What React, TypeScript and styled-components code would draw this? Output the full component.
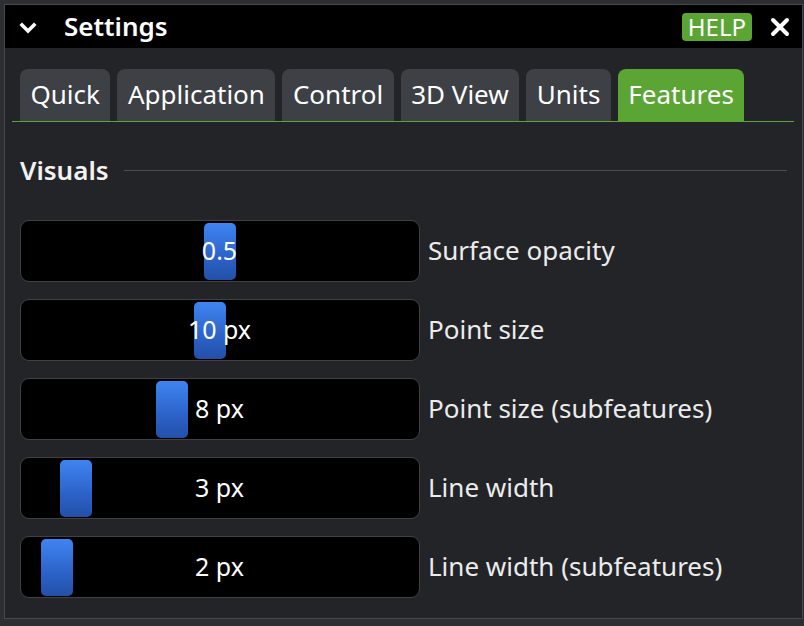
import React from "react";
import styled, { createGlobalStyle } from "styled-components";

const Global = createGlobalStyle`
  html, body { margin: 0; padding: 0; background: #2d2e32; }
  body { font-family: "Noto Sans", "Open Sans", sans-serif; color: #ececec; }
`;

const Window = styled.div`
  box-sizing: border-box;
  width: 799px;
  height: 615px;
  margin: 4px 0 0 4px;
  border: 1px solid #46484c;
  background: #232428;
  display: flex;
  flex-direction: column;
`;

const Header = styled.div`
  height: 43px;
  background: #000;
  display: flex;
  align-items: center;
  padding: 0 12px 0 14px;
  flex-shrink: 0;
`;

const Chevron = styled.svg`
  width: 18px;
  height: 12px;
  margin-top: 2px;
`;

const Title = styled.div`
  margin-left: 27px;
  font-size: 26px;
  font-weight: 600;
  color: #fff;
  flex: 1;
  line-height: 1;
  margin-top: -2px;
`;

const HelpBadge = styled.div`
  background: #5ba535;
  color: #fff;
  font-size: 24px;
  line-height: 28px;
  height: 28px;
  padding: 0 6px;
  border-radius: 4px;
`;

const CloseIcon = styled.svg`
  width: 20px;
  height: 20px;
  margin-left: 18px;
`;

const TabBar = styled.div`
  margin: 21px 8px 0 7px;
  padding-left: 8px;
  display: flex;
  gap: 7px;
  border-bottom: 1px solid #5ba535;
  height: 52px;
`;

const Tab = styled.div<{ $active?: boolean }>`
  height: 52px;
  box-sizing: border-box;
  padding: 0 10.5px;
  border-radius: 8px 8px 0 0;
  background: ${(p) => (p.$active ? "#5ba535" : "#3d4045")};
  color: #fff;
  font-size: 26px;
  line-height: 50px;
  white-space: nowrap;
`;

const Content = styled.div`
  padding: 0 0 0 15px;
  display: flex;
  flex-direction: column;
`;

const SectionHeader = styled.div`
  display: flex;
  align-items: center;
  margin-top: 31px;
  height: 34px;
  margin-right: 15px;
`;

const SectionTitle = styled.div`
  font-size: 26px;
  font-weight: 600;
  color: #f2f2f2;
  line-height: 34px;
`;

const SectionLine = styled.div`
  flex: 1;
  height: 1px;
  background: #4a4c50;
  margin-left: 15px;
`;

const Rows = styled.div`
  display: flex;
  flex-direction: column;
  gap: 17px;
  margin-top: 33px;
`;

const Row = styled.div`
  display: flex;
  align-items: center;
`;

const Slider = styled.div`
  position: relative;
  box-sizing: border-box;
  width: 400px;
  height: 62px;
  background: #000;
  border: 1px solid #3f4145;
  border-radius: 9px;
  display: flex;
  align-items: center;
  justify-content: center;
`;

const Handle = styled.div`
  position: absolute;
  top: 2px;
  width: 32px;
  height: 57px;
  border-radius: 5px;
  background: linear-gradient(180deg, #3f84f2 0%, #2c62c8 60%, #2350a8 100%);
`;

const Value = styled.div`
  position: relative;
  font-size: 25px;
  color: #fff;
  line-height: 1;
  margin-top: -2px;
  margin-left: -1px;
`;

const Label = styled.div`
  margin-left: 8px;
  font-size: 26px;
  color: #ececec;
  white-space: nowrap;
  margin-top: -3px;
`;

const tabs = ["Quick", "Application", "Control", "3D View", "Units", "Features"];

const sliders = [
  { value: "0.5", frac: 0.5, label: "Surface opacity" },
  { value: "10 px", frac: 9 / 19, label: "Point size" },
  { value: "8 px", frac: 7 / 19, label: "Point size (subfeatures)" },
  { value: "3 px", frac: 2 / 19, label: "Line width" },
  { value: "2 px", frac: 1 / 19, label: "Line width (subfeatures)" },
];

export default function App() {
  return (
    <>
      <Global />
      <Window>
        <Header>
          <Chevron viewBox="0 0 18 12">
            <path d="M3 3 L9 9 L15 3" fill="none" stroke="#fff" strokeWidth="3.6" strokeLinecap="square" strokeLinejoin="miter" />
          </Chevron>
          <Title>Settings</Title>
          <HelpBadge>HELP</HelpBadge>
          <CloseIcon viewBox="0 0 20 20">
            <path d="M3 3 L17 17 M17 3 L3 17" stroke="#fff" strokeWidth="4" strokeLinecap="round" />
          </CloseIcon>
        </Header>
        <TabBar>
          {tabs.map((t) => (
            <Tab key={t} $active={t === "Features"}>
              {t}
            </Tab>
          ))}
        </TabBar>
        <Content>
          <SectionHeader>
            <SectionTitle>Visuals</SectionTitle>
            <SectionLine />
          </SectionHeader>
          <Rows>
            {sliders.map((s) => (
              <Row key={s.label}>
                <Slider>
                  <Handle style={{ left: 1 + s.frac * 364 }} />
                  <Value>{s.value}</Value>
                </Slider>
                <Label>{s.label}</Label>
              </Row>
            ))}
          </Rows>
        </Content>
      </Window>
    </>
  );
}
